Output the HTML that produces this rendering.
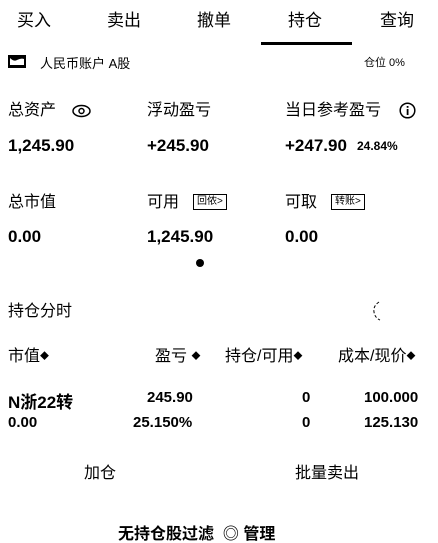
<!DOCTYPE html><html><head><meta charset="utf-8"><style>
body{margin:0;width:438px;height:535px;overflow:hidden;background:#fff;color:#000;font-family:"Liberation Sans","Noto Sans CJK SC",sans-serif;position:relative}
.a{position:absolute;white-space:nowrap;line-height:1}
.t{font-size:17px}
.l{font-size:16px}
.n{font-size:17px;font-weight:bold}
.s{font-size:9px;vertical-align:2px}
.box{position:absolute;border:1.5px solid #000;font-size:10px;line-height:14px;padding:0 3px;height:14px}
</style></head><body>
<div class="a t" style="left:17px;top:12px">买入</div>
<div class="a t" style="left:107px;top:12px">卖出</div>
<div class="a t" style="left:197px;top:12px">撤单</div>
<div class="a t" style="left:288px;top:12px">持仓</div>
<div class="a t" style="left:380px;top:12px">查询</div>
<div class="a" style="left:261px;top:42px;width:91px;height:3px;background:#000"></div>
<svg class="a" style="left:8px;top:55px" width="18" height="13"><rect x="0" y="0" width="18" height="13" fill="#000"/><path d="M2 3 Q6 7 9 5 Q13 3 16 4 L16 10 L2 10Z" fill="#fff"/></svg>
<div class="a" style="left:40px;top:57px;font-size:13px">人民币账户 A股</div>
<div class="a" style="left:364px;top:58px;font-size:11px">仓位 0%</div>
<div class="a l" style="left:8px;top:103px">总资产</div>
<svg class="a" style="left:72px;top:104px" width="19" height="14"><ellipse cx="9.5" cy="7" rx="8.5" ry="5.5" fill="none" stroke="#000" stroke-width="1.5"/><circle cx="9.5" cy="7" r="2.5" fill="none" stroke="#000" stroke-width="1.5"/></svg>
<div class="a l" style="left:147px;top:103px">浮动盈亏</div>
<div class="a l" style="left:285px;top:103px">当日参考盈亏</div>
<svg class="a" style="left:399px;top:102px" width="17" height="17"><circle cx="8.5" cy="8.5" r="7.3" fill="none" stroke="#000" stroke-width="1.5"/><rect x="7.7" y="7" width="1.8" height="6" fill="#000"/><rect x="7.7" y="4" width="1.8" height="1.8" fill="#000"/></svg>
<div class="a n" style="left:8px;top:137px">1,245.90</div>
<div class="a n" style="left:147px;top:137px">+245.90</div>
<div class="a n" style="left:285px;top:137px">+247.90</div>
<div class="a" style="left:357px;top:140px;font-size:12px;font-weight:bold">24.84%</div>
<div class="a l" style="left:8px;top:195px">总市值</div>
<div class="a l" style="left:147px;top:195px">可用</div>
<div class="box" style="left:193px;top:194px">回侬&gt;</div>
<div class="a l" style="left:285px;top:195px">可取</div>
<div class="box" style="left:331px;top:194px">转账&gt;</div>
<div class="a n" style="left:8px;top:228px">0.00</div>
<div class="a n" style="left:147px;top:228px">1,245.90</div>
<div class="a n" style="left:285px;top:228px">0.00</div>
<div class="a" style="left:196px;top:259px;width:8px;height:8px;border-radius:50%;background:#000"></div>
<div class="a l" style="left:8px;top:304px">持仓分时</div>
<svg class="a" style="left:371px;top:300px" width="16" height="24"><path d="M8 2 Q2 6 3 12 Q4 18 9 20" fill="none" stroke="#000" stroke-width="1" stroke-dasharray="3 2"/></svg>
<div class="a l" style="left:8px;top:349px">市值<span class="s">◆</span></div>
<div class="a l" style="left:155px;top:349px">盈亏 <span class="s">◆</span></div>
<div class="a l" style="left:225px;top:349px">持仓/可用<span class="s">◆</span></div>
<div class="a l" style="left:338px;top:349px">成本/现价<span class="s">◆</span></div>
<div class="a n" style="left:8px;top:394px">N浙22转</div>
<div class="a" style="left:147px;top:390px;font-size:15px;font-weight:bold">245.90</div>
<div class="a" style="left:302px;top:390px;font-size:15px;font-weight:bold">0</div>
<div class="a" style="left:364px;top:390px;font-size:15px;font-weight:bold">100.000</div>
<div class="a" style="left:8px;top:415px;font-size:15px;font-weight:bold">0.00</div>
<div class="a" style="left:133px;top:415px;font-size:15px;font-weight:bold">25.150%</div>
<div class="a" style="left:302px;top:415px;font-size:15px;font-weight:bold">0</div>
<div class="a" style="left:364px;top:415px;font-size:15px;font-weight:bold">125.130</div>
<div class="a l" style="left:84px;top:466px">加仓</div>
<div class="a l" style="left:295px;top:466px">批量卖出</div>
<div class="a l" style="left:118px;top:527px;font-weight:bold">无持仓股过滤 &nbsp;◎ 管理</div>
</body></html>
